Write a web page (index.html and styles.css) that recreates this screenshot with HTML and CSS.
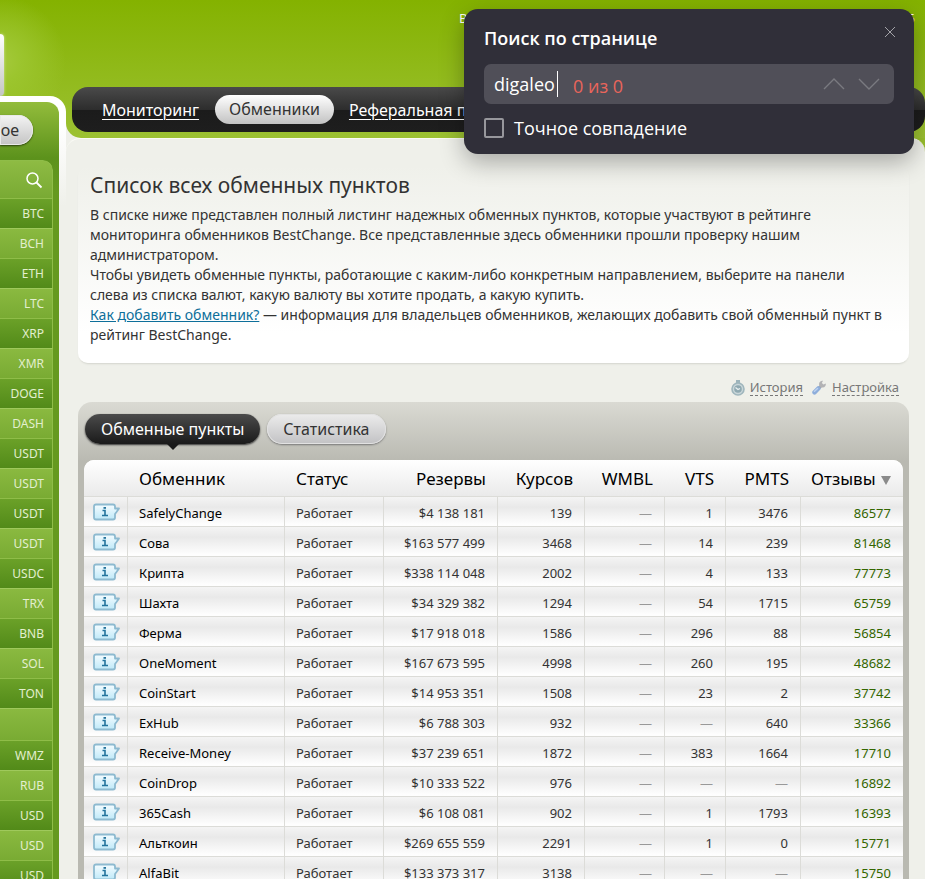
FILE: index.html
```html
<!DOCTYPE html>
<html lang="ru">
<head>
<meta charset="utf-8">
<title>Список всех обменных пунктов</title>
<link rel="stylesheet" href="styles.css">
</head>
<body>
<div class="page">
  <aside class="side">
    <div class="logo"></div>
    <div class="side-panel">
      <div class="side-inner">
        <div class="side-tabs"><button class="pill" type="button">ое</button></div>
        <ul class="codes" id="codes">
          <li class="search"><svg width="18" height="18" viewBox="0 0 18 18" fill="none" stroke="#fff" stroke-width="1.5"><circle cx="7.500" cy="7.500" r="5.500"/><path d="M11.500 11.500L16.500 16.500" stroke-width="1.800"/></svg></li>
        </ul>
      </div>
    </div>
  </aside>
  <div class="main">
    <header class="top">
      <div class="topline"><span>В</span><span>5</span></div>
      <nav class="nav">
        <a href="#">Мониторинг</a>
        <a href="#" class="current">Обменники</a>
        <a href="#">Реферальная программа</a>
      </nav>
    </header>
    <main class="content">
      <section class="card">
        <h1>Список всех обменных пунктов</h1>
        <p>В списке ниже представлен полный листинг надежных обменных пунктов, которые участвуют в рейтинге<br>мониторинга обменников BestChange. Все представленные здесь обменники прошли проверку нашим<br>администратором.</p>
        <p>Чтобы увидеть обменные пункты, работающие с каким-либо конкретным направлением, выберите на панели<br>слева из списка валют, какую валюту вы хотите продать, а какую купить.</p>
        <p><a href="#">Как добавить обменник?</a> — информация для владельцев обменников, желающих добавить свой обменный пункт в<br>рейтинг BestChange.</p>
      </section>
      <div class="tools">
        <svg width="14" height="16" viewBox="0 0 14 16"><rect x="5" y="0" width="4" height="3" fill="#9db4bb"/><circle cx="7" cy="9" r="6" fill="#c9d6d9" stroke="#9fb6bd" stroke-width="1.600"/><circle cx="7" cy="9" r="3.800" fill="#8fa9b1"/><path d="M4.500 7.500L7 9.500L9 8.500" stroke="#e9f0f2" stroke-width="1.300" fill="none"/></svg>
        <a href="#">История</a>
        <svg width="15" height="15" viewBox="0 0 15 15"><path d="M7 8L10 5" stroke="#a7a7a9" stroke-width="3"/><path d="M13.800 3.500A3.400 3.400 0 1 1 11 .8L9.800 3L11.500 4.500Z" fill="#b3b3b5"/><path d="M2.500 12.300L6.300 8.500" stroke="#8eaedb" stroke-width="4.500" stroke-linecap="round"/><path d="M2.500 11.300L5.500 8.500" stroke="#bcd2f0" stroke-width="1.500" stroke-linecap="round"/></svg>
        <a href="#">Настройка</a>
      </div>
      <section class="panel">
        <div class="tabs">
          <button type="button" class="tab active">Обменные пункты</button>
          <button type="button" class="tab">Статистика</button>
        </div>
        <table>
          <colgroup><col class="c0"><col><col class="c2"><col class="c3"><col class="c4"><col class="c5"><col class="c6"><col class="c7"><col class="c8"></colgroup>
          <thead><tr><th></th><th class="l">Обменник</th><th class="l">Статус</th><th>Резервы</th><th>Курсов</th><th>WMBL</th><th>VTS</th><th>PMTS</th><th>Отзывы <i class="sort"></i></th></tr></thead>
          <tbody id="rows"></tbody>
        </table>
      </section>
    </main>
  </div>
</div>
<form class="find">
  <h2>Поиск по странице</h2>
  <button class="close" type="button" aria-label="Закрыть"><svg width="12" height="12" viewBox="0 0 12 12" stroke="#a3a3a8" fill="none"><path d="M1 1L11 11M11 1L1 11"/></svg></button>
  <div class="field">
    <input type="text" value="digaleo" aria-label="Поиск"><span class="count">0 из 0</span>
    <button type="button" aria-label="Назад"><svg width="22" height="12" viewBox="0 0 22 12" stroke="#7a7a80" stroke-width="1.400" fill="none"><path d="M1 11L11 1L21 11"/></svg></button>
    <button type="button" aria-label="Вперёд"><svg width="22" height="12" viewBox="0 0 22 12" stroke="#7a7a80" stroke-width="1.400" fill="none"><path d="M1 1L11 11L21 1"/></svg></button>
  </div>
  <label><input type="checkbox">Точное совпадение</label>
</form>
<script src="page.js"></script>
</body>
</html>
```
FILE: styles.css
```css
* { box-sizing: border-box; }
html { scrollbar-width: none; }
body {
  margin: 0;
  background: #eff0ea;
  color: #333;
  font: 13px/20px "Noto Sans", "Open Sans", sans-serif;
  overflow-x: hidden;
}
button { font: inherit; border: 0; padding: 0; background: none; }
a { color: inherit; }
.page { display: grid; grid-template-columns: 66px minmax(0, 1fr); }

/* left column */
.side {
  background:
    radial-gradient(circle at 0 62px, #a5c93c 0, #9cc52e 20px, rgba(150, 190, 30, 0) 66px) no-repeat,
    linear-gradient(#84b200, #9cc132) 0 0 / 100% 138px no-repeat;
}
.logo {
  width: 4px;
  height: 62px;
  margin-top: 34px;
  border-radius: 0 5px 5px 0;
  background: linear-gradient(#fff, #c4c6c4);
  box-shadow: 0 0 3px #d5e4a0;
}
.side-panel {
  padding: 6px 7px 0 0;
  border-radius: 0 16px 0 0;
  background: linear-gradient(#fff, #fff 30px, #eff0ea 110px);
}
.side-inner {
  border-radius: 0 12px 0 0;
  background: linear-gradient(#93bc3b, #5c921c 56px, #65991f 90px);
}
.side-tabs { height: 58px; padding-top: 13px; }
.pill {
  display: block;
  width: 33px;
  height: 30px;
  padding-right: 14px;
  border-radius: 0 15px 15px 0;
  background: linear-gradient(#f4f4f4, #c4c4c4);
  box-shadow: 0 1px 2px rgba(0, 0, 0, .6), inset 0 0 0 1px #e9e9e9;
  color: #333;
  font-size: 16px;
  text-align: right;
}
.codes {
  width: 53px;
  margin: 0;
  padding: 0;
  list-style: none;
  border-radius: 0 10px 0 0;
  overflow: hidden;
  color: #e3efcf;
  font-size: 12px;
  line-height: 30px;
  text-align: right;
}
.codes li {
  height: 30px;
  padding-right: 8px;
  border-top: 1px solid #8fbd48;
  border-right: 1px solid #8fbd48;
  background: linear-gradient(#6ba128, #528a19);
}
.codes li.light { background: linear-gradient(#8ab940, #79ab33); border-top-color: #9fc95c; }
.codes li.gap { height: 32px; }
.codes li.search {
  height: 38px;
  padding: 10px 9px 0 0;
  border-radius: 0 10px 0 0;
  line-height: 0;
  background: linear-gradient(#8ebb43, #79aa34);
}

/* header */
.main { background: linear-gradient(#84b200, #9cc132) right top / 20px 160px no-repeat; }
.top {
  height: 138px;
  padding: 10px 0 6px 6px;
  border-radius: 0 0 0 15px;
  background: linear-gradient(#84b200, #9cc132);
}
.topline {
  display: flex;
  justify-content: space-between;
  height: 77px;
  padding: 0 10px 0 387px;
  color: #fff;
  line-height: 16px;
}
.nav {
  display: flex;
  align-items: center;
  height: 45px;
  padding-left: 30px;
  border-radius: 16px;
  background: linear-gradient(#4a4a4a, #2d2d2d 50%, #1b1b1b 52%, #1e1e1e);
  color: #fff;
  font-size: 16px;
  white-space: nowrap;
  overflow: hidden;
}
.nav a { text-underline-offset: 3px; text-decoration-thickness: 1px; }
.nav .current {
  height: 29px;
  margin: 0 15px 0 16px;
  padding: 0 14px;
  border-radius: 15px;
  background: linear-gradient(#fff, #c2c2c2);
  color: #333;
  line-height: 28px;
  text-decoration: none;
}

/* content */
.content {
  padding: 27px 16px 0 12px;
  border-top: 1px solid #fbfbf6;
  border-radius: 14px;
  background: #eff0ea;
}
.card {
  padding: 6px 12px 18px 12px;
  border-radius: 10px;
  background: linear-gradient(#eff0ea, #fff 85%);
  box-shadow: 0 2px 2px -1px #d3d4cd;
}
h1 { margin: 0 0 7px; font-size: 21px; font-weight: 400; line-height: 26px; }
.card p { margin: 0; font-size: 14px; white-space: nowrap; }
.card a { color: #0e6f9a; }
.tools {
  display: flex;
  justify-content: flex-end;
  align-items: center;
  gap: 5px;
  height: 39px;
  padding: 10px 10px 0 0;
  color: #777;
}
.tools a { border-bottom: 1px dashed #777; line-height: 16px; text-decoration: none; }
.tools a + svg { margin-left: 4px; }
.panel {
  padding: 12px 6px 0;
  border-radius: 14px 14px 0 0;
  background: linear-gradient(#dadad3, #b9b9b1 60px);
}
.tabs { display: flex; gap: 7px; height: 46px; padding-left: 1px; }
.tab {
  position: relative;
  height: 30px;
  padding: 0 16px;
  border-radius: 15px;
  background: linear-gradient(#ececec, #c2c2c4);
  box-shadow: 0 1px 2px #777, inset 0 0 0 1px #e2e2e2;
  color: #333;
  font-size: 16px;
  line-height: 30px;
}
.tab.active {
  background: linear-gradient(#4b4b4b, #1a1a1a);
  box-shadow: 0 1px 2px #333;
  color: #fff;
}
.tab.active::after {
  content: "";
  position: absolute;
  top: 30px;
  left: calc(50% - 6px);
  border: 6px solid transparent;
  border-top-color: #1a1a1a;
  border-bottom: 0;
}

table {
  width: 100%;
  table-layout: fixed;
  border-collapse: separate;
  border-spacing: 0;
  border-radius: 10px 10px 0 0;
  overflow: hidden;
  background: #fff;
}
.c0 { width: 44px; }
.c2 { width: 99px; }
.c3 { width: 114px; }
.c4 { width: 87px; }
.c5 { width: 80px; }
.c6 { width: 61px; }
.c7 { width: 75px; }
.c8 { width: 102px; }
th {
  height: 36px;
  padding: 2px 12px 0 0;
  background: linear-gradient(#fff, #eaeaea);
  color: #000;
  font-size: 17px;
  font-weight: 400;
  text-align: right;
  white-space: nowrap;
}
th.l, td.l { padding-left: 11px; text-align: left; }
td {
  height: 30px;
  padding: 2px 12px 0 0;
  border-top: 1px solid #dcdcd8;
  border-right: 1px solid #dcdcd8;
  background: linear-gradient(#f4f4f4, #e9e9e9 35%, #fefefe 95%);
  line-height: 20px;
  text-align: right;
  white-space: nowrap;
}
td:last-child { border-right: 0; color: #360; }
td:first-child { padding: 0 0 0 9px; line-height: 0; text-align: left; }
td a { color: #000; text-decoration: none; }
.none { color: #999; }
.sort {
  display: inline-block;
  margin-left: 1px;
  border: 5px solid transparent;
  border-top: 9px solid #8a8a8a;
  border-bottom: 0;
}

/* find bar */
.find {
  position: absolute;
  top: 9px;
  right: 11px;
  width: 450px;
  padding: 17px 20px 14px;
  border-radius: 14px;
  background: #302f39;
  box-shadow: 0 8px 24px rgba(0, 0, 0, .3);
  color: #fff;
  font: 18px/24px "Open Sans", "Noto Sans", sans-serif;
}
.find h2 { margin: 0 0 14px; font-size: 18px; font-weight: 600; line-height: 24px; }
.close { position: absolute; top: 17px; right: 18px; line-height: 0; }
.field {
  display: flex;
  align-items: center;
  gap: 13px;
  height: 40px;
  padding: 0 14px 0 10px;
  border-radius: 7px;
  background: #504f58;
}
.field button { line-height: 0; }
.field input {
  width: 64px;
  height: 26px;
  padding: 0;
  border: 0;
  border-right: 1px solid #fff;
  outline: 0;
  background: none;
  color: #fff;
  font: inherit;
}
.count { flex: 1; padding: 4px 0 0 2px; color: #e9655b; }
.find label { display: flex; align-items: center; gap: 10px; margin-top: 12px; }
.find label input {
  appearance: none;
  width: 20px;
  height: 20px;
  margin: 0;
  border: 2px solid #97979c;
  border-radius: 2px;
}
```
FILE: page.js
```js
const codes = ["BTC", "BCH", "ETH", "LTC", "XRP", "XMR", "DOGE", "DASH", "USDT", "USDT", "USDT", "USDT", "USDC", "TRX", "BNB", "SOL", "TON", "", "WMZ", "RUB", "USD", "USD", "USD"];
document.getElementById("codes").insertAdjacentHTML("beforeend", codes.map((code, i) =>
  `<li class="${i % 2 ? "light" : ""}${code ? "" : " gap"}">${code}</li>`).join(""));

const rows = [
  ["SafelyChange", "4 138 181", 139, 1, 3476, 86577],
  ["Сова", "163 577 499", 3468, 14, 239, 81468],
  ["Крипта", "338 114 048", 2002, 4, 133, 77773],
  ["Шахта", "34 329 382", 1294, 54, 1715, 65759],
  ["Ферма", "17 918 018", 1586, 296, 88, 56854],
  ["OneMoment", "167 673 595", 4998, 260, 195, 48682],
  ["CoinStart", "14 953 351", 1508, 23, 2, 37742],
  ["ExHub", "6 788 303", 932, null, 640, 33366],
  ["Receive-Money", "37 239 651", 1872, 383, 1664, 17710],
  ["CoinDrop", "10 333 522", 976, null, null, 16892],
  ["365Cash", "6 108 081", 902, 1, 1793, 16393],
  ["Альткоин", "269 655 559", 2291, 1, 0, 15771],
  ["AlfaBit", "133 373 317", 3138, null, null, 15750]
];
const cell = v => v === null ? '<td class="none">—</td>' : `<td>${v}</td>`;
const info = '<svg width="28" height="18" viewBox="0 0 28 18"><defs><linearGradient id="g" x2="0" y2="1"><stop offset="0" stop-color="#f5fcff"/><stop offset="1" stop-color="#bfe9f8"/></linearGradient></defs><path d="M3 1.500H20Q22 1.500 22 3.500V5.500H26L23.500 9L22 11V14.500Q22 16.500 20 16.500H3Q1 16.500 1 14.500V3.500Q1 1.500 3 1.500Z" fill="url(#g)" stroke="#8dbad0" stroke-width="1.800" stroke-linejoin="round"/><path d="M9.500 7.500H12V12.500M9 12.500H15" fill="none" stroke="#23739c" stroke-width="1.600"/><rect x="10.500" y="4" width="2.500" height="1.800" fill="#23739c"/></svg>';
document.getElementById("rows").innerHTML = rows.map(([name, reserve, rates, vts, pmts, reviews]) =>
  `<tr><td>${info}</td><td class="l"><a href="#">${name}</a></td><td class="l">Работает</td><td>$${reserve}</td><td>${rates}</td>${cell(null)}${cell(vts)}${cell(pmts)}<td>${reviews}</td></tr>`).join("");
```
